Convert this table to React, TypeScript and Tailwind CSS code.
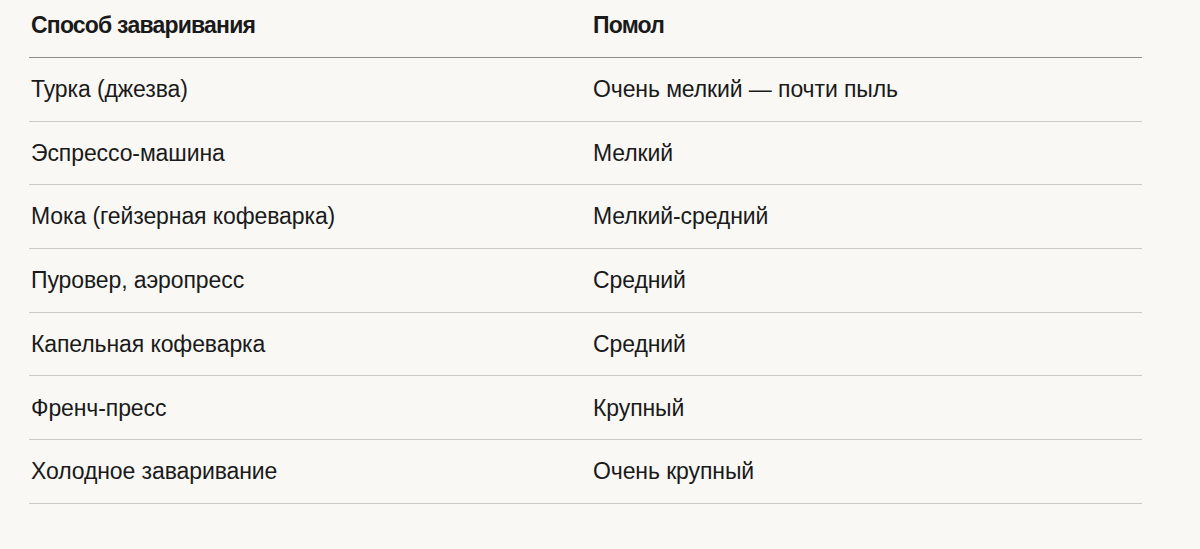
const rows: [string, string][] = [
  ["Турка (джезва)", "Очень мелкий — почти пыль"],
  ["Эспрессо-машина", "Мелкий"],
  ["Мока (гейзерная кофеварка)", "Мелкий-средний"],
  ["Пуровер, аэропресс", "Средний"],
  ["Капельная кофеварка", "Средний"],
  ["Френч-пресс", "Крупный"],
  ["Холодное заваривание", "Очень крупный"],
];

export default function App() {
  return (
    <div className="min-h-screen bg-[#f9f8f5] font-['Liberation_Sans',Arial,sans-serif] text-[23px] text-[#1a1a1a]">
      <div className="ml-[29px] w-[1113px]">
        <div className="grid h-[58px] grid-cols-[562px_1fr] items-center border-b border-[#8f8d89] pb-[7px] pl-[2px] font-bold tracking-[-0.8px]">
          <div>Способ заваривания</div>
          <div>Помол</div>
        </div>
        {rows.map(([method, grind]) => (
          <div
            key={method}
            className="grid h-[63.7px] grid-cols-[562px_1fr] items-center border-b border-[#cdcbc7] pl-[2px] tracking-[-0.1px]"
          >
            <div>{method}</div>
            <div>{grind}</div>
          </div>
        ))}
      </div>
    </div>
  );
}
